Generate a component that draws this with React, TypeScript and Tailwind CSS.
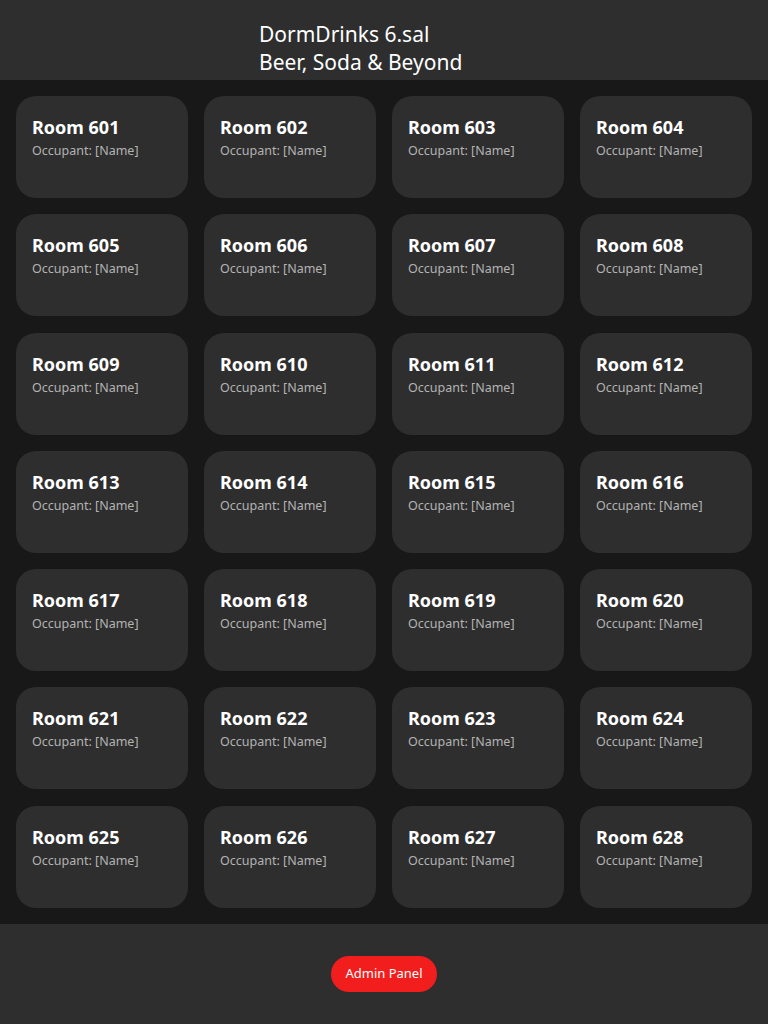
const rooms = Array.from({ length: 28 }, (_, i) => 601 + i);

export default function App() {
  return (
    <div className="flex flex-col min-h-[1024px] w-[768px] bg-[#181818] font-['Noto_Sans',sans-serif] text-white">
      <header className="h-[80px] bg-[#2e2e2e] pl-[259px] pt-[20px]">
        <h1 className="text-[21px] leading-[28px] font-normal">
          DormDrinks 6.sal
          <br />
          Beer, Soda &amp; Beyond
        </h1>
      </header>

      <main className="grid grid-cols-4 gap-4 p-4 flex-1">
        {rooms.map((n) => (
          <div key={n} className="h-[102px] rounded-[20px] bg-[#2e2e2e] px-4 pt-[20px]">
            <h2 className="text-[18px] leading-[22px] font-bold">Room {n}</h2>
            <p className="text-[12.5px] leading-[18px] mt-[4px] text-[#b3b3b3]">Occupant: [Name]</p>
          </div>
        ))}
      </main>

      <footer className="h-[100px] bg-[#2e2e2e] flex items-center justify-center">
        <button className="h-[36px] px-[14px] rounded-full bg-[#f21d1d] text-[13px] text-white">
          Admin Panel
        </button>
      </footer>
    </div>
  );
}
